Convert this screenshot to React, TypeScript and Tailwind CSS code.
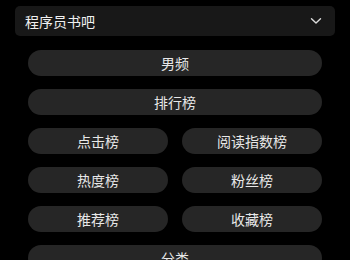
import React from 'react';

const font = { fontFamily: '"Noto Sans CJK SC", "Noto Sans", sans-serif' };

const Pill: React.FC<{ label: string }> = ({ label }) => (
  <button className="h-[26px] w-full rounded-full bg-[#262626] text-[14px] text-[#e8e8e8] leading-none flex items-center justify-center">
    {label}
  </button>
);

const App: React.FC = () => {
  return (
    <div className="w-[350px] h-[260px] bg-black overflow-hidden px-[15px] pt-[6px]" style={font}>
      <div className="h-[30px] rounded-[5px] bg-[#181818] flex items-center justify-between pl-[10px] pr-[13px]">
        <span className="text-[14px] text-[#f0f0f0] leading-none">程序员书吧</span>
        <svg width="12" height="8" viewBox="0 0 12 8" fill="none" stroke="#dcdcdc" strokeWidth="1.4" strokeLinecap="round" strokeLinejoin="round">
          <path d="M1.5 1.8 L6 6 L10.5 1.8" />
        </svg>
      </div>
      <div className="mt-[14px] px-[13px] flex flex-col gap-[13px]">
        <Pill label="男频" />
        <Pill label="排行榜" />
        <div className="grid grid-cols-2 gap-x-[14px] gap-y-[13px]">
          <Pill label="点击榜" />
          <Pill label="阅读指数榜" />
          <Pill label="热度榜" />
          <Pill label="粉丝榜" />
          <Pill label="推荐榜" />
          <Pill label="收藏榜" />
        </div>
        <Pill label="分类" />
      </div>
    </div>
  );
};

export default App;
